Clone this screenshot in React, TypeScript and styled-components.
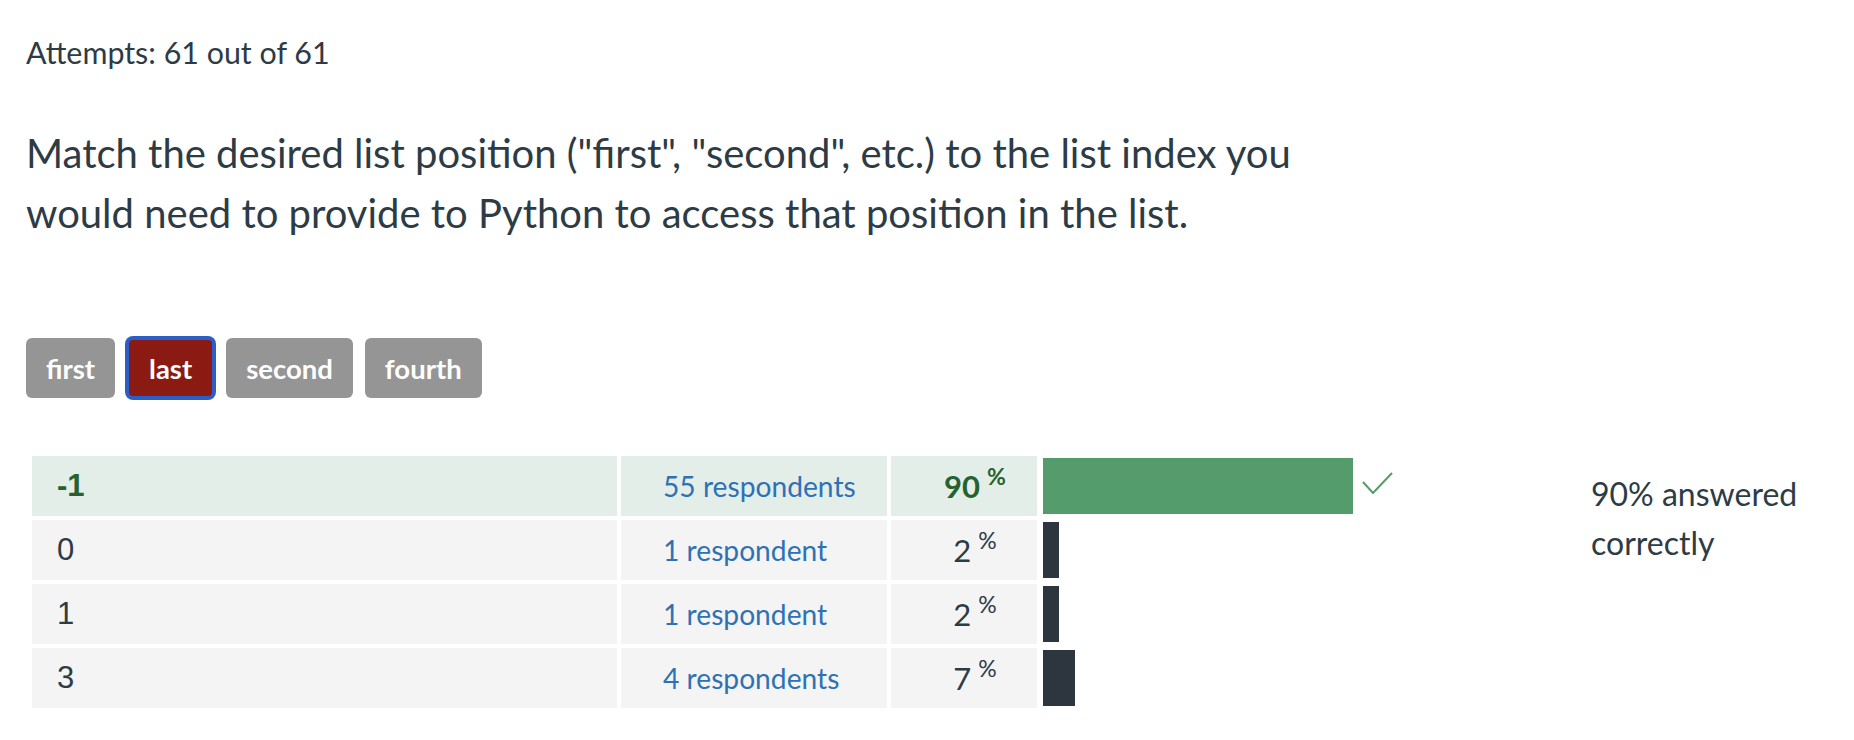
import React from "react";
import styled, { createGlobalStyle } from "styled-components";

const GlobalStyle = createGlobalStyle`
  body {
    margin: 0;
    background: #ffffff;
    font-family: Lato, "Liberation Sans", sans-serif;
    color: #2d3b45;
  }
`;

type Answer = {
  label: string;
  respondents: string;
  percent: number;
  barWidth: number;
  correct?: boolean;
};

const answers: Answer[] = [
  { label: "-1", respondents: "55 respondents", percent: 90, barWidth: 310, correct: true },
  { label: "0", respondents: "1 respondent", percent: 2, barWidth: 16 },
  { label: "1", respondents: "1 respondent", percent: 2, barWidth: 16 },
  { label: "3", respondents: "4 respondents", percent: 7, barWidth: 32 },
];

const tags = ["first", "last", "second", "fourth"];

const Page = styled.div`
  padding: 33px 0 0 26px;
`;

const Attempts = styled.div`
  font-size: 30.4px;
  line-height: 38px;
`;

const Question = styled.div`
  margin-top: 52px;
  max-width: 1310px;
  font-size: 40px;
  line-height: 60px;
`;

const TagRow = styled.div`
  display: flex;
  gap: 12px;
  margin-top: 95px;
`;

const Tag = styled.button<{ $active?: boolean }>`
  height: 60px;
  padding: 0 20px;
  border-radius: 6px;
  border: ${({ $active }) => ($active ? "2px solid #2b5fc7" : "none")};
  box-shadow: ${({ $active }) => ($active ? "0 0 0 2px #2b5fc7" : "none")};
  background: ${({ $active }) => ($active ? "#8b1a12" : "#959595")};
  color: #ffffff;
  font-family: Lato, "Liberation Sans", sans-serif;
  font-weight: 700;
  font-size: 27.5px;
  cursor: pointer;
`;

const Stats = styled.div`
  display: flex;
  margin-top: 58px;
`;

const Table = styled.div`
  flex: 0 0 1364px;
  margin-left: 6px;
  display: grid;
  grid-template-columns: 585px 266px 146px 1fr;
  grid-auto-rows: 60px;
  gap: 4px;
`;

const Cell = styled.div<{ $correct?: boolean }>`
  display: flex;
  align-items: center;
  background: ${({ $correct }) => ($correct ? "#e4eee8" : "#f4f4f4")};
  font-size: 28.2px;
`;

const LabelCell = styled(Cell)`
  padding-left: 25px;
  font-family: "Liberation Sans", Arial, sans-serif;
  font-size: 31px;
  font-weight: ${({ $correct }) => ($correct ? 700 : 400)};
  color: ${({ $correct }) => ($correct ? "#24622f" : "#2d3b45")};
`;

const CountCell = styled(Cell)`
  padding-left: 42px;
  color: #2f71b5;
`;

const PercentCell = styled(Cell)`
  justify-content: center;
  padding-left: 22px;
  font-size: 31px;
  font-weight: ${({ $correct }) => ($correct ? 700 : 400)};
  color: ${({ $correct }) => ($correct ? "#24622f" : "#2d3b45")};
`;

const Percent = styled.span`
  line-height: 1;
`;

const Sup = styled.sup`
  font-size: 23px;
  margin-left: 7px;
  vertical-align: 13px;
  line-height: 0;
`;

const BarCell = styled.div`
  display: flex;
  align-items: center;
  gap: 9px;
  padding: 2px 0 2px 2px;
`;

const Bar = styled.div<{ $correct?: boolean }>`
  height: 56px;
  background: ${({ $correct }) => ($correct ? "#559c6c" : "#2d353e")};
`;

const Check = styled.svg`
  width: 31px;
  height: 22px;
  margin-bottom: 6px;
`;

const Side = styled.div`
  margin-left: 195px;
  margin-top: 13px;
  font-size: 32px;
  line-height: 49px;
  width: 260px;
`;

export default function App() {
  return (
    <>
      <GlobalStyle />
      <Page>
        <Attempts>Attempts: 61 out of 61</Attempts>
        <Question>
          Match the desired list position ("first", "second", etc.) to the list
          index you would need to provide to Python to access that position in
          the list.
        </Question>
        <TagRow>
          {tags.map((t) => (
            <Tag key={t} $active={t === "last"}>
              {t}
            </Tag>
          ))}
        </TagRow>
        <Stats>
          <Table>
            {answers.map((a) => (
              <React.Fragment key={a.label}>
                <LabelCell $correct={a.correct}>{a.label}</LabelCell>
                <CountCell $correct={a.correct}>{a.respondents}</CountCell>
                <PercentCell $correct={a.correct}>
                  <Percent>
                    {a.percent}
                    <Sup>%</Sup>
                  </Percent>
                </PercentCell>
                <BarCell>
                  <Bar $correct={a.correct} style={{ width: a.barWidth }} />
                  {a.correct && (
                    <Check viewBox="0 0 31 22">
                      <polyline
                        points="1,10 11,21 30,1"
                        fill="none"
                        stroke="#559c6c"
                        strokeWidth="2"
                      />
                    </Check>
                  )}
                </BarCell>
              </React.Fragment>
            ))}
          </Table>
          <Side>90% answered correctly</Side>
        </Stats>
      </Page>
    </>
  );
}
